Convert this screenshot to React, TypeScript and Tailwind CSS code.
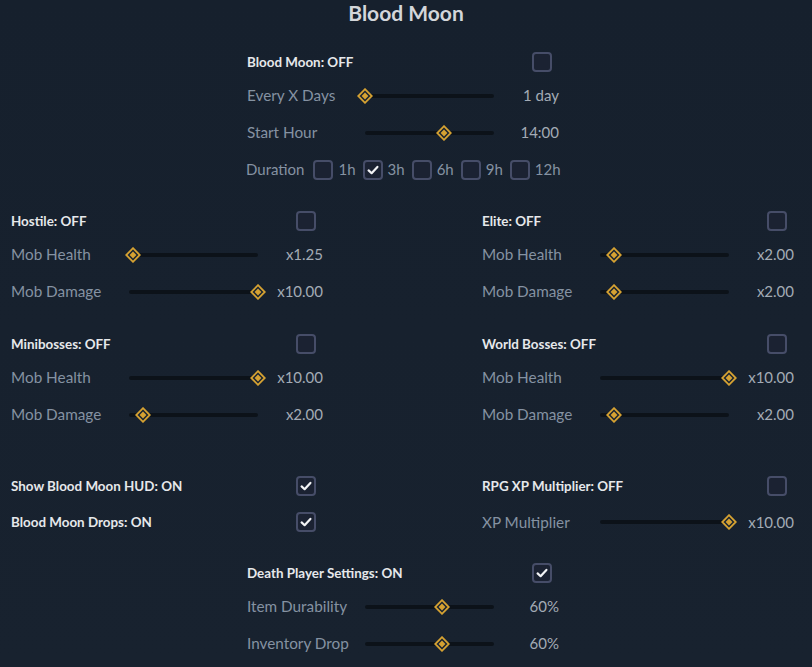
import React from 'react';

const GOLD = '#d6a232';

const Thumb: React.FC = () => (
  <svg width="16" height="16" viewBox="0 0 16 16" className="block">
    <polygon points="8,1.2 14.8,8 8,14.8 1.2,8" fill="#1a2431" stroke={GOLD} strokeWidth="1.8" />
    <polygon points="8,4.6 11.4,8 8,11.4 4.6,8" fill={GOLD} />
  </svg>
);

const Check: React.FC = () => (
  <svg width="14" height="14" viewBox="0 0 14 14" className="block">
    <polyline points="2.6,7.4 5.6,10.2 11.4,3.9" fill="none" stroke="#f2f3f5" strokeWidth="2.2" strokeLinecap="round" strokeLinejoin="round" />
  </svg>
);

const Box: React.FC<{ checked?: boolean }> = ({ checked }) => (
  <div className="w-5 h-5 rounded-[4px] border-2 border-[#464d68] bg-[#1b2232] flex items-center justify-center shrink-0">
    {checked && <Check />}
  </div>
);

const Header: React.FC<{ label: string; checked?: boolean; h?: string }> = ({ label, checked, h = 'h-[30px]' }) => (
  <div className={`flex items-center ${h}`}>
    <span className="flex-1 text-[13.4px] font-bold text-[#e6e8eb]">{label}</span>
    <div className="mr-[7px]">
      <Box checked={checked} />
    </div>
  </div>
);

const Slider: React.FC<{ label: string; value: string; frac: number; h?: string }> = ({ label, value, frac, h = 'h-[37px]' }) => (
  <div className={`flex items-center ${h}`}>
    <span className="w-[118px] text-[15.3px] text-[#8592a2]">{label}</span>
    <div className="relative w-[129px] h-[4px] rounded-full bg-[#0c1219]">
      <div className="absolute top-1/2 -translate-x-1/2 -translate-y-1/2" style={{ left: `${frac * 100}%` }}>
        <Thumb />
      </div>
    </div>
    <span className="flex-1 text-right text-[15px] text-[#a3abb5]">{value}</span>
  </div>
);

const Option: React.FC<{ label: string; checked?: boolean }> = ({ label, checked }) => (
  <div className="flex items-center gap-[5px]">
    <Box checked={checked} />
    <span className="text-[15px] text-[#8592a2]">{label}</span>
  </div>
);

// sliders run from x1 to x10
const f = (v: number) => (v - 1) / 9;

export default function App() {
  return (
    <div
      className="w-[812px] h-[667px] overflow-hidden bg-gradient-to-b from-[#16202d] to-[#18222f] flex flex-col"
      style={{ fontFamily: 'Lato, "Noto Sans", sans-serif' }}
    >
      <div className="h-[25px] flex items-center justify-center text-[21px] font-bold text-[#d3d6da]">Blood Moon</div>

      <div className="w-[312px] ml-[247px] mt-[22px]">
        <Header label="Blood Moon: OFF" />
        <Slider label="Every X Days" value="1 day" frac={0} />
        <Slider label="Start Hour" value="14:00" frac={14 / 23} />
        <div className="flex items-center h-[37px] gap-[7px] -ml-[1px]">
          <span className="text-[15px] text-[#8592a2] mr-[2px]">Duration</span>
          <Option label="1h" />
          <Option label="3h" checked />
          <Option label="6h" />
          <Option label="9h" />
          <Option label="12h" />
        </div>
      </div>

      <div className="flex justify-between pl-[11px] pr-[18px] mt-[18px]">
        <div className="w-[312px]">
          <Header label="Hostile: OFF" />
          <Slider label="Mob Health" value="x1.25" frac={f(1.25)} />
          <Slider label="Mob Damage" value="x10.00" frac={f(10)} />
        </div>
        <div className="w-[312px]">
          <Header label="Elite: OFF" />
          <Slider label="Mob Health" value="x2.00" frac={f(2)} />
          <Slider label="Mob Damage" value="x2.00" frac={f(2)} />
        </div>
      </div>

      <div className="flex justify-between pl-[11px] pr-[18px] mt-[19px]">
        <div className="w-[312px]">
          <Header label="Minibosses: OFF" />
          <Slider label="Mob Health" value="x10.00" frac={f(10)} />
          <Slider label="Mob Damage" value="x2.00" frac={f(2)} />
        </div>
        <div className="w-[312px]">
          <Header label="World Bosses: OFF" />
          <Slider label="Mob Health" value="x10.00" frac={f(10)} />
          <Slider label="Mob Damage" value="x2.00" frac={f(2)} />
        </div>
      </div>

      <div className="flex justify-between pl-[11px] pr-[18px] mt-[35px]">
        <div className="w-[312px]">
          <Header label="Show Blood Moon HUD: ON" checked h="h-[36px]" />
          <Header label="Blood Moon Drops: ON" checked h="h-[36px]" />
        </div>
        <div className="w-[312px]">
          <Header label="RPG XP Multiplier: OFF" h="h-[36px]" />
          <Slider label="XP Multiplier" value="x10.00" frac={f(10)} h="h-[36px]" />
        </div>
      </div>

      <div className="w-[312px] ml-[247px] mt-[18px]">
        <Header label="Death Player Settings: ON" checked />
        <Slider label="Item Durability" value="60%" frac={0.6} />
        <Slider label="Inventory Drop" value="60%" frac={0.6} />
      </div>
    </div>
  );
}
